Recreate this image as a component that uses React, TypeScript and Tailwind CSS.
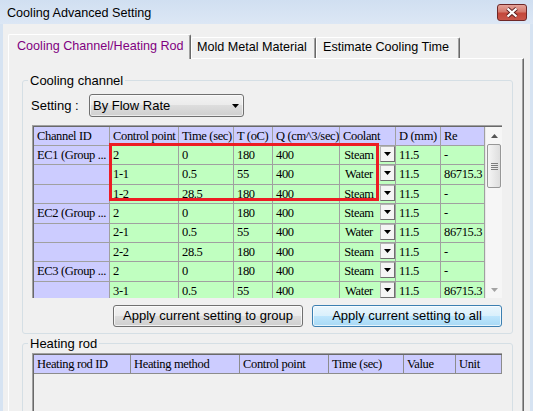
import React from 'react';

type Row = { id: string; cp: string; t: string; T: string; q: string; c: string; d: string; re: string };

const rows: Row[] = [
  { id: 'EC1 (Group ...', cp: '2', t: '0', T: '180', q: '400', c: 'Steam', d: '11.5', re: '-' },
  { id: '', cp: '1-1', t: '0.5', T: '55', q: '400', c: 'Water', d: '11.5', re: '86715.3' },
  { id: '', cp: '1-2', t: '28.5', T: '180', q: '400', c: 'Steam', d: '11.5', re: '-' },
  { id: 'EC2 (Group ...', cp: '2', t: '0', T: '180', q: '400', c: 'Steam', d: '11.5', re: '-' },
  { id: '', cp: '2-1', t: '0.5', T: '55', q: '400', c: 'Water', d: '11.5', re: '86715.3' },
  { id: '', cp: '2-2', t: '28.5', T: '180', q: '400', c: 'Steam', d: '11.5', re: '-' },
  { id: 'EC3 (Group ...', cp: '2', t: '0', T: '180', q: '400', c: 'Steam', d: '11.5', re: '-' },
  { id: '', cp: '3-1', t: '0.5', T: '55', q: '400', c: 'Water', d: '11.5', re: '86715.3' },
];

const cell = 'shrink-0 h-full border-r border-b border-[#a0a0a0] pl-[3px] flex items-center overflow-hidden whitespace-nowrap';

function Tri({ color = '#000' }: { color?: string }) {
  return (
    <svg width="7" height="4" viewBox="0 0 7 4">
      <path d="M0 0h7L3.5 4z" fill={color} />
    </svg>
  );
}

function TriUp({ color = '#000' }: { color?: string }) {
  return (
    <svg width="7" height="4" viewBox="0 0 7 4">
      <path d="M0 4h7L3.5 0z" fill={color} />
    </svg>
  );
}

function CoolingGrid() {
  return (
    <div className="relative w-[470px] h-[173px] border-l border-t border-[#a0a0a0]">
      <div className="h-full flex border-l border-t border-[#696969] overflow-hidden bg-[#f0f0f0] font-['Liberation_Serif',serif] text-[12.5px] tracking-[-0.35px] text-black">
        <div className="w-[451px] shrink-0 overflow-hidden">
          <div className="flex h-[19px] bg-[#ccccff]">
            <div className={`${cell} w-[76px]`}>Channel ID</div>
            <div className={`${cell} w-[69px]`}>Control point</div>
            <div className={`${cell} w-[55px]`}>Time (sec)</div>
            <div className={`${cell} w-[39px]`}>T (oC)</div>
            <div className={`${cell} w-[67px]`}>Q (cm^3/sec)</div>
            <div className={`${cell} w-[56px]`}>Coolant</div>
            <div className={`${cell} w-[45px]`}>D (mm)</div>
            <div className={`${cell} w-[44px]`}>Re</div>
          </div>
          {rows.map((r, i) => (
            <div key={i} className="flex h-[19.4px]">
              <div className={`${cell} w-[76px] bg-[#ccccff]`}>{r.id}</div>
              <div className={`${cell} w-[69px] bg-[#c0ffc0]`}>{r.cp}</div>
              <div className={`${cell} w-[55px] bg-[#c0ffc0]`}>{r.t}</div>
              <div className={`${cell} w-[39px] bg-[#c0ffc0]`}>{r.T}</div>
              <div className={`${cell} w-[67px] bg-[#c0ffc0]`}>{r.q}</div>
              <div className="shrink-0 w-[56px] h-full border-r border-b border-[#a0a0a0] bg-[#c0ffc0] flex items-start overflow-hidden whitespace-nowrap">
                <span className="flex-1 h-full flex items-center justify-center pr-[2px]">{r.c}</span>
                <span className="w-[15px] h-[16px] shrink-0 flex items-center justify-center bg-[#f5f5f5] border border-[#b5b5b5] border-r-[#6f6f6f] border-b-[#6f6f6f]">
                  <Tri />
                </span>
              </div>
              <div className={`${cell} w-[45px] bg-[#c0ffc0]`}>{r.d}</div>
              <div className={`${cell} w-[44px] bg-[#c0ffc0]`}>{r.re}</div>
            </div>
          ))}
        </div>
        <div className="w-[17px] shrink-0 h-full bg-[#f6f6f6] border-l border-[#e8e8e8] flex flex-col">
          <div className="h-[17px] flex items-center justify-center">
            <TriUp color="#555" />
          </div>
          <div className="flex justify-center">
            <div className="w-[14px] h-[44px] rounded-[2px] border border-[#979797] bg-gradient-to-r from-[#f5f5f5] to-[#dedede] flex flex-col items-center justify-center gap-[1px]">
              <div className="w-[7px] h-[1px] bg-[#7c7c7c]" />
              <div className="w-[7px] h-[1px] bg-[#7c7c7c]" />
              <div className="w-[7px] h-[1px] bg-[#7c7c7c]" />
              <div className="w-[7px] h-[1px] bg-[#7c7c7c]" />
            </div>
          </div>
          <div className="mt-auto h-[17px] flex items-center justify-center">
            <Tri color="#a3a3a3" />
          </div>
        </div>
      </div>
      <div className="absolute left-[76px] top-[17px] w-[270px] h-[58px] border-[3px] border-[#ed1c24] pointer-events-none" />
    </div>
  );
}

const hcell = 'shrink-0 h-full border-r border-b border-[#8c8c8c] pl-[3px] flex items-center overflow-hidden whitespace-nowrap';

function HeatingGrid() {
  return (
    <div className="w-[470px] h-[80px] border-l border-t border-[#a0a0a0]">
      <div className="h-full border-l border-t border-[#696969] bg-[#f0f0f0] font-['Liberation_Serif',serif] text-[12.5px] tracking-[-0.35px] text-black">
        <div className="flex h-[19px] bg-[#ccccff]">
          <div className={`${hcell} w-[97px]`}>Heating rod ID</div>
          <div className={`${hcell} w-[109px]`}>Heating method</div>
          <div className={`${hcell} w-[89px]`}>Control point</div>
          <div className={`${hcell} w-[75px]`}>Time (sec)</div>
          <div className={`${hcell} w-[52px]`}>Value</div>
          <div className={`${hcell} w-[46px]`}>Unit</div>
        </div>
      </div>
    </div>
  );
}

const win7btn =
  'h-[22px] rounded-[3px] border flex items-center justify-center text-[13px] shadow-[inset_0_0_0_1px_rgba(255,255,255,0.7)]';

export default function App() {
  return (
    <div className="w-[533px] h-[411px] overflow-hidden bg-[#f0f0f0] flex flex-col font-['Liberation_Sans',Arial,sans-serif] text-black">
      {/* Title bar */}
      <div className="h-[24px] shrink-0 flex justify-between items-start pl-[7px] pr-[6px] bg-gradient-to-b from-[#d0dff1] to-[#dce7f5]">
        <span className="mt-[6px] leading-[15px] text-[12.6px]">Cooling Advanced Setting</span>
        <div className="mt-[4px] w-[30px] h-[17px] rounded-[3px] border border-[#6e2727] bg-[linear-gradient(#e4a399_0%,#d57a6e_45%,#c4473a_55%,#c8564a_100%)] flex items-center justify-center">
          <svg width="14" height="11" viewBox="0 0 14 11">
            <path d="M2.5 1.5L11.5 9.5M11.5 1.5L2.5 9.5" stroke="#5a1f1f" strokeWidth="4" />
            <path d="M2.5 1.5L11.5 9.5M11.5 1.5L2.5 9.5" stroke="#ffffff" strokeWidth="2.2" />
          </svg>
        </div>
      </div>

      {/* Body */}
      <div className="flex-1 flex min-h-0">
        <div className="w-[3px] shrink-0 bg-[#d6e3f2]" />
        <div className="flex-1 flex flex-col pl-[5px] pr-[6px] min-w-0">
          {/* Tabs */}
          <div className="flex items-end h-[24px] mt-[10px] relative z-10 text-[12.6px]">
            <div className="w-[183px] h-[25px] -mb-[1px] bg-[#f0f0f0] border-l border-t border-white border-r border-r-[#696969] shadow-[inset_-1px_0_0_#a0a0a0] rounded-t-[2px] pl-[8px] pb-[1px] flex items-center text-[#800080] whitespace-nowrap">
              Cooling Channel/Heating Rod
            </div>
            <div className="w-[125px] h-[21px] bg-[#f0f0f0] border-l border-t border-white border-r border-r-[#696969] shadow-[inset_-1px_0_0_#a0a0a0] rounded-t-[2px] pl-[5px] pb-[1px] flex items-center whitespace-nowrap">
              Mold Metal Material
            </div>
            <div className="w-[144px] h-[21px] bg-[#f0f0f0] border-l border-t border-white border-r border-r-[#696969] shadow-[inset_-1px_0_0_#a0a0a0] rounded-t-[2px] pl-[6px] pb-[1px] flex items-center whitespace-nowrap">
              Estimate Cooling Time
            </div>
          </div>

          {/* Panel */}
          <div className="flex-1 w-[516px] bg-[#f0f0f0] border-l border-t border-white border-r border-r-[#696969] shadow-[inset_-1px_0_0_#a0a0a0] pl-[13px] pr-[10px]">
            <fieldset className="mt-[14px] border border-[#d5dfe5] rounded-[3px]">
              <legend className="ml-[5px] px-[2px] text-[13px] leading-[15px]">Cooling channel</legend>
              <div className="pl-[9px] pt-[6px] pb-[6px]">
                <div className="flex items-center -ml-[1px] text-[13px]">
                  <span className="w-[58px] shrink-0">Setting :</span>
                  <div className="w-[155px] h-[23px] rounded-[3px] border border-[#707070] bg-[linear-gradient(#f2f2f2_0%,#ebebeb_50%,#dddddd_50%,#cfcfcf_100%)] shadow-[inset_0_0_0_1px_rgba(255,255,255,0.6)] flex items-center pl-[3px] pr-[4px]">
                    <span className="flex-1">By Flow Rate</span>
                    <Tri />
                  </div>
                </div>
                <div className="mt-[8px]">
                  <CoolingGrid />
                </div>
                <div className="mt-[7px] w-[470px] flex justify-end gap-[9px]">
                  <div className={`${win7btn} w-[190px] border-[#707070] bg-[linear-gradient(#f2f2f2_0%,#ebebeb_50%,#dddddd_50%,#cfcfcf_100%)]`}>
                    Apply current setting to group
                  </div>
                  <div className={`${win7btn} w-[190px] border-[#3c7fb1] bg-[linear-gradient(#eaf6fd_0%,#d9f0fc_50%,#bee6fd_50%,#a7d9f5_100%)]`}>
                    Apply current setting to all
                  </div>
                </div>
              </div>
            </fieldset>

            <fieldset className="mt-[2px] border border-[#d5dfe5] rounded-[3px]">
              <legend className="ml-[5px] px-[2px] text-[13px] leading-[15px]">Heating rod</legend>
              <div className="pl-[9px] pt-[2px]">
                <HeatingGrid />
              </div>
            </fieldset>
          </div>
        </div>
        <div className="w-[3px] shrink-0 bg-[#d6e3f2]" />
      </div>
    </div>
  );
}
